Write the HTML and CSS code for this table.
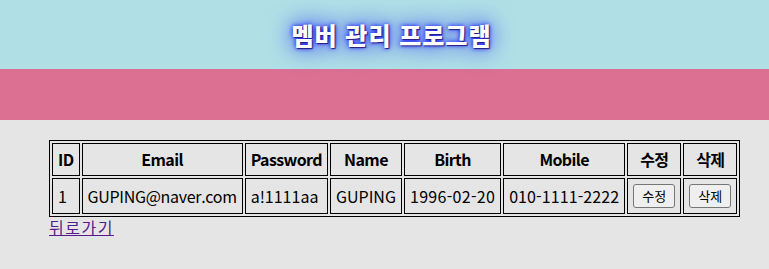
FILE: index.html
```html
<!DOCTYPE html>
<html lang="ko">
<head>
<meta charset="utf-8">
<title>멤버 관리 프로그램</title>
<link rel="stylesheet" href="styles.css">
</head>
<body>
<header class="top">
  <h1 class="title">멤버 관리 프로그램</h1>
</header>
<nav class="band"></nav>
<main class="content">
  <table class="members">
    <thead>
      <tr>
        <th>ID</th>
        <th>Email</th>
        <th>Password</th>
        <th>Name</th>
        <th>Birth</th>
        <th>Mobile</th>
        <th>수정</th>
        <th>삭제</th>
      </tr>
    </thead>
    <tbody>
      <tr>
        <td>1</td>
        <td class="email">GUPING@naver.com</td>
        <td>a!1111aa</td>
        <td>GUPING</td>
        <td class="num">1996-02-20</td>
        <td class="phone">010-1111-2222</td>
        <td><button class="btn" type="button">수정</button></td>
        <td><button class="btn" type="button">삭제</button></td>
      </tr>
    </tbody>
  </table>
  <a class="back" href="#">뒤로가기</a>
</main>
</body>
</html>
```
FILE: styles.css
```css
html, body {
  margin: 0;
  padding: 0;
}
body {
  background: #e5e5e5;
  font-family: "Noto Sans CJK KR", "Noto Sans", sans-serif;
  font-size: 16px;
  line-height: 21px;
}
.top {
  height: 69px;
  background: #b0e0e6;
  display: flex;
  align-items: center;
  justify-content: center;
}
.title {
  margin: 0;
  padding-left: 14px;
  font-size: 24px;
  line-height: 32px;
  font-weight: 900;
  color: #fff;
  letter-spacing: 1px;
  text-shadow: 1px 1px 1px #2a1a7a, 0 0 1em blue, 0 0 0.2em blue;
}
.band {
  height: 51px;
  background: #db7093;
}
.content {
  padding: 20px 0 0 49px;
  white-space: nowrap;
}
.members {
  border: 1px solid #000;
  border-spacing: 2px;
}
.members th,
.members td {
  border: 1px solid #000;
  padding: 5px;
  white-space: nowrap;
}
.members th {
  letter-spacing: -0.6px;
}
.members td {
  text-align: left;
}
.members td.email {
  letter-spacing: -0.3px;
}
.members td.num {
  letter-spacing: 0.3px;
}
.members td.phone {
  letter-spacing: 0.1px;
}
.btn {
  font-family: "Noto Sans CJK KR", sans-serif;
  font-size: 13px;
  line-height: 18px;
  letter-spacing: 0;
  padding: 2px 7px;
  min-width: 42px;
  height: 24px;
  background: #efefef;
  border: 1px solid #767676;
  border-radius: 3px;
  color: #000;
  white-space: nowrap;
}
.back {
  color: #551a8b;
  display: inline-block;
  letter-spacing: 1.5px;
}
```
